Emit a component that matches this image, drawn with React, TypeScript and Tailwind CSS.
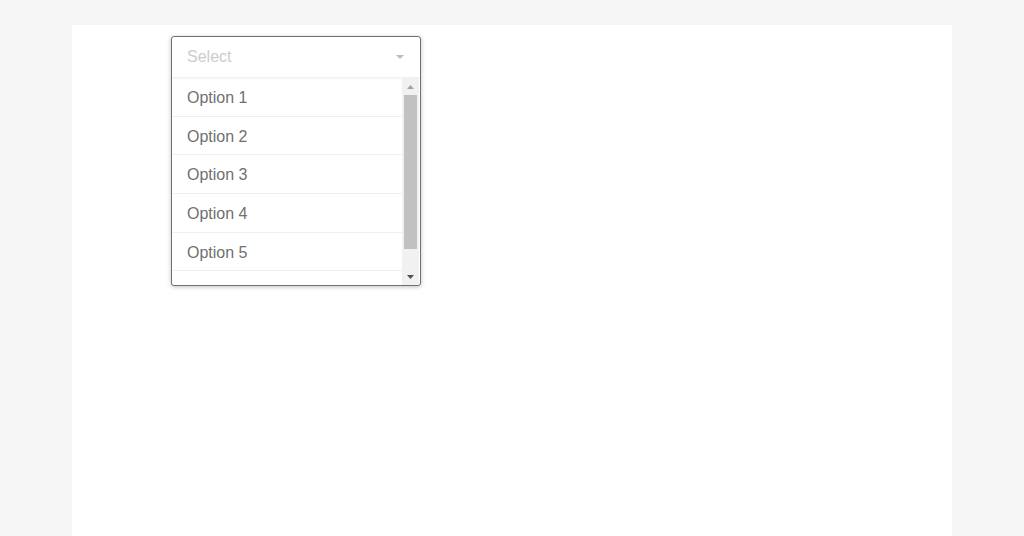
import React from "react";

const options = ["Option 1", "Option 2", "Option 3", "Option 4", "Option 5"];

export default function App() {
  return (
    <div className="h-[536px] bg-[#f5f5f5] pt-[25px] font-['Liberation_Sans',Arial,sans-serif] overflow-hidden">
      <div className="mx-[72px] h-[511px] bg-white pt-[11px] pl-[99px]">
        {/* Select box */}
        <div className="w-[250px] h-[250px] rounded-[3px] border border-[#707070] bg-white shadow-[0_1px_4px_rgba(0,0,0,0.25)] flex flex-col overflow-hidden">
          <div className="h-[41px] shrink-0 flex items-center justify-between pl-[15px] pr-[16px] border-b border-[#f0f0f0] shadow-[0_1px_2px_rgba(0,0,0,0.04)]">
            <span className="text-[16px] text-[#cccccc]">Select</span>
            <svg width="8" height="4" viewBox="0 0 8 4">
              <path d="M0 0h8L4 4z" fill="#bdbdbd" />
            </svg>
          </div>
          <div className="flex flex-1 min-h-0">
            <div className="flex-1 overflow-hidden">
              {options.map((o) => (
                <div
                  key={o}
                  className="h-[38.7px] flex items-center pl-[15px] border-b border-[#efefef] text-[16px] text-[#707070] leading-[16px]"
                >
                  <span className="mt-[2px]">{o}</span>
                </div>
              ))}
              {/* next option, scrolled below the fold */}
              <div className="h-[38.7px] border-b border-[#efefef]" />
            </div>
            {/* Scrollbar */}
            <div className="w-[17px] shrink-0 bg-[#f1f1f1] flex flex-col mr-px">
              <div className="h-[17px] flex items-center justify-center">
                <svg width="7" height="4" viewBox="0 0 7 4">
                  <path d="M0 4h7L3.5 0z" fill="#a3a3a3" />
                </svg>
              </div>
              <div className="mx-[2px] h-[154px] bg-[#c1c1c1]" />
              <div className="flex-1" />
              <div className="h-[17px] flex items-center justify-center">
                <svg width="7" height="4" viewBox="0 0 7 4">
                  <path d="M0 0h7L3.5 4z" fill="#505050" />
                </svg>
              </div>
            </div>
          </div>
        </div>
      </div>
    </div>
  );
}
